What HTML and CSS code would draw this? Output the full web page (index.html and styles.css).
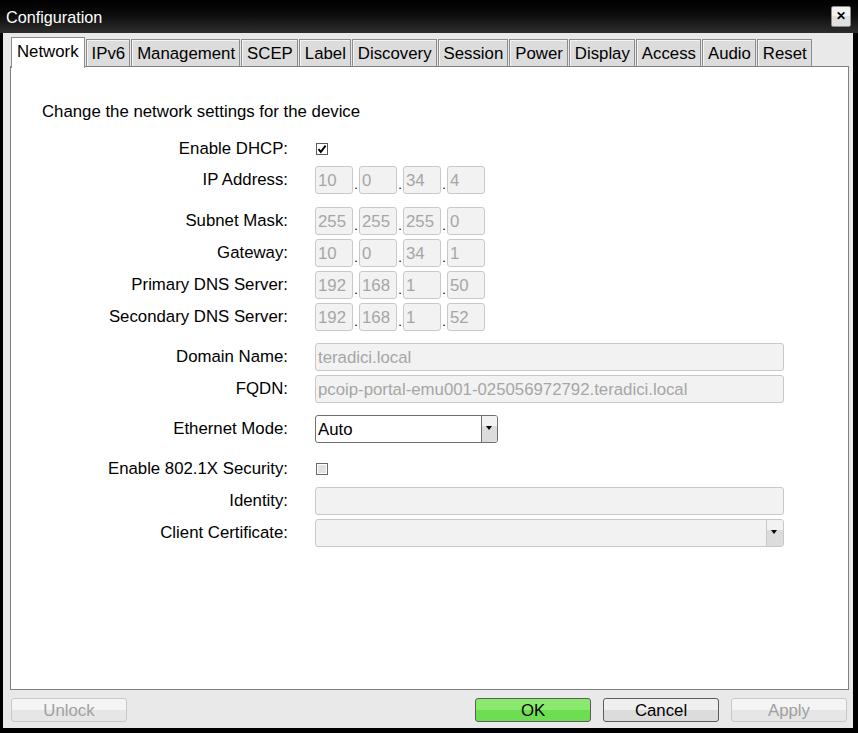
FILE: index.html
```html
<!DOCTYPE html>
<html>
<head>
<meta charset="utf-8">
<link rel="stylesheet" href="styles.css">
</head>
<body>
<div class="window">
  <div class="titlebar">
    <span class="title">Configuration</span>
    <span class="close">&#x2715;</span>
  </div>
  <div class="client">
    <div class="tabs">
      <div class="tab active">Network</div>
      <div class="tab">IPv6</div>
      <div class="tab">Management</div>
      <div class="tab">SCEP</div>
      <div class="tab">Label</div>
      <div class="tab">Discovery</div>
      <div class="tab">Session</div>
      <div class="tab">Power</div>
      <div class="tab">Display</div>
      <div class="tab">Access</div>
      <div class="tab">Audio</div>
      <div class="tab">Reset</div>
    </div>
    <div class="panel">
      <p class="intro">Change the network settings for the device</p>
      <div class="form">
        <div class="label row-check">Enable DHCP:</div>
        <div class="field row-check"><span class="check checked"><svg width="10" height="10" viewBox="0 0 10 10"><path d="M1.5 5.2 L3.8 8 L8.6 1.6" fill="none" stroke="#000" stroke-width="2"/></svg></span></div>

        <div class="label">IP Address:</div>
        <div class="field ip"><span class="box">10</span><span class="dot">.</span><span class="box">0</span><span class="dot">.</span><span class="box">34</span><span class="dot">.</span><span class="box">4</span></div>

        <div class="label sep first">Subnet Mask:</div>
        <div class="field ip sep first"><span class="box">255</span><span class="dot">.</span><span class="box">255</span><span class="dot">.</span><span class="box">255</span><span class="dot">.</span><span class="box">0</span></div>

        <div class="label">Gateway:</div>
        <div class="field ip"><span class="box">10</span><span class="dot">.</span><span class="box">0</span><span class="dot">.</span><span class="box">34</span><span class="dot">.</span><span class="box">1</span></div>

        <div class="label">Primary DNS Server:</div>
        <div class="field ip"><span class="box">192</span><span class="dot">.</span><span class="box">168</span><span class="dot">.</span><span class="box">1</span><span class="dot">.</span><span class="box">50</span></div>

        <div class="label">Secondary DNS Server:</div>
        <div class="field ip"><span class="box">192</span><span class="dot">.</span><span class="box">168</span><span class="dot">.</span><span class="box">1</span><span class="dot">.</span><span class="box">52</span></div>

        <div class="label sep">Domain Name:</div>
        <div class="field sep"><span class="text wide">teradici.local</span></div>

        <div class="label">FQDN:</div>
        <div class="field"><span class="text wide">pcoip-portal-emu001-025056972792.teradici.local</span></div>

        <div class="label sep">Ethernet Mode:</div>
        <div class="field sep"><span class="select"><span class="sel-value">Auto</span><span class="arrow"></span></span></div>

        <div class="label sep">Enable 802.1X Security:</div>
        <div class="field sep"><span class="check off"><span class="inner"></span></span></div>

        <div class="label">Identity:</div>
        <div class="field"><span class="text wide"></span></div>

        <div class="label">Client Certificate:</div>
        <div class="field"><span class="select disabled wide"><span class="sel-value"></span><span class="arrow"></span></span></div>
      </div>
    </div>
    <div class="buttons">
      <span class="btn disabled">Unlock</span>
      <span class="spacer"></span>
      <span class="btn ok">OK</span>
      <span class="btn">Cancel</span>
      <span class="btn disabled">Apply</span>
    </div>
  </div>
</div>
</body>
</html>
```

FILE: styles.css
```css
html, body {
  margin: 0;
  padding: 0;
  background: #000;
}
body {
  font-family: "Liberation Sans", Arial, sans-serif;
  font-size: 16.8px;
  color: #000;
}
.window {
  width: 858px;
  height: 733px;
  display: flex;
  flex-direction: column;
  background: #000;
}
.titlebar {
  height: 33px;
  flex: none;
  display: flex;
  align-items: flex-start;
  justify-content: space-between;
  background: linear-gradient(#000 0%, #0c0c0c 45%, #2e2e2e 100%);
}
.title {
  color: #fff;
  font-size: 16.2px;
  margin: 8px 0 0 6px;
  line-height: 18px;
}
.close {
  width: 18px;
  height: 19px;
  margin: 6px 7px 0 0;
  border: 1px solid #8a8a8a;
  border-radius: 2px;
  background: linear-gradient(#f2f2f2 0%, #f2f2f2 50%, #e0e0e0 50%, #e0e0e0 100%);
  color: #000;
  font-size: 12px;
  font-weight: bold;
  line-height: 19px;
  text-align: center;
}
.client {
  flex: 1;
  margin: 0 5px 5px 3px;
  background: #e9e9e9;
  display: flex;
  flex-direction: column;
  padding: 4px 4px 0 7px;
}
.tabs {
  display: flex;
  align-items: flex-end;
  gap: 1px;
  padding-left: 1px;
  height: 30px;
  position: relative;
  z-index: 1;
}
.tab {
  height: 26px;
  line-height: 27px;
  padding: 0 4px 0 5px;
  border: 1px solid #8c8c8c;
  border-bottom: none;
  background: #dcdcdc;
  box-shadow: inset 1px 1px 0 #f4f4f4;
  margin-bottom: 1px;
}
.tab.active {
  height: 30px;
  line-height: 28px;
  background: #fff;
  box-shadow: none;
  margin-bottom: -1px;
  padding: 0 5px;
}
.panel {
  flex: 1;
  background: #fff;
  border: 1px solid #808080;
  margin-top: -1px;
  padding: 36px 0 0 0;
}
.intro {
  margin: 0 0 14px 31px;
  line-height: 18px;
}
.form {
  display: grid;
  grid-template-columns: 277px 1fr;
  column-gap: 27px;
  row-gap: 4px;
  align-items: center;
}
.label {
  text-align: right;
  height: 28px;
  line-height: 28px;
}
.field {
  height: 28px;
  display: flex;
  align-items: center;
}
.row-check {
  height: 27px;
  line-height: 27px;
}
.sep {
  margin-top: 8px;
}
.sep.first {
  margin-top: 9px;
}
.check {
  width: 10px;
  height: 10px;
  margin-left: 1px;
  border: 1px solid #5a5a5a;
  display: flex;
  align-items: center;
  justify-content: center;
}
.check.checked {
  background: #fff;
}
.check.off {
  background: #fff;
  border-color: #6a6a6a;
}
.check .inner {
  width: 8px;
  height: 8px;
  background: #e2e2e2;
  border: 0;
}
.box, .text {
  box-sizing: border-box;
  height: 28px;
  line-height: 27px;
  border: 1px solid #c8c8c8;
  border-radius: 3px;
  background: #f2f2f2;
  color: #a6a6a6;
  padding-left: 2px;
  white-space: nowrap;
  overflow: hidden;
}
.box {
  width: 38px;
}
.dot {
  width: 6px;
  text-align: center;
  color: #000;
  font-size: 13px;
  line-height: 28px;
  padding-top: 5px;
  box-sizing: border-box;
  height: 28px;
}
.wide {
  width: 469px;
}
.select {
  box-sizing: border-box;
  display: flex;
  width: 183px;
  height: 28px;
  border: 1px solid #707070;
  border-radius: 3px;
  background: #fff;
  overflow: hidden;
}
.select.disabled {
  width: 469px;
  border-color: #c8c8c8;
  background: #f2f2f2;
}
.sel-value {
  flex: 1;
  line-height: 27px;
  padding-left: 2px;
}
.arrow {
  width: 15px;
  border-left: 1px solid #707070;
  background: linear-gradient(#f2f2f2 0%, #f2f2f2 40%, #dcdcdc 40%, #dcdcdc 100%);
  position: relative;
}
.select.disabled .arrow {
  width: 16px;
  border-left-color: #c8c8c8;
}
.arrow::after {
  content: "";
  position: absolute;
  left: 4px;
  top: 10px;
  border-left: 3.5px solid transparent;
  border-right: 3.5px solid transparent;
  border-top: 4px solid #000;
}
.buttons {
  height: 38px;
  display: flex;
  align-items: flex-start;
  gap: 12px;
  padding: 8px 2px 0 1px;
  box-sizing: border-box;
}
.spacer {
  flex: 1;
}
.btn {
  box-sizing: border-box;
  width: 116px;
  height: 24px;
  line-height: 23px;
  text-align: center;
  border: 1px solid #5c5c5c;
  border-radius: 3px;
  background: linear-gradient(#efefef 0%, #efefef 50%, #dcdcdc 50%, #dcdcdc 100%);
  color: #000;
}
.btn.disabled {
  border-color: #c8c8c8;
  background: linear-gradient(#f4f4f4 0%, #f4f4f4 50%, #e6e6e6 50%, #e6e6e6 100%);
  color: #a0a0a0;
}
.btn.ok {
  background: linear-gradient(#8aea6e 0%, #8aea6e 50%, #6ddd52 50%, #6ddd52 100%);
}
```
